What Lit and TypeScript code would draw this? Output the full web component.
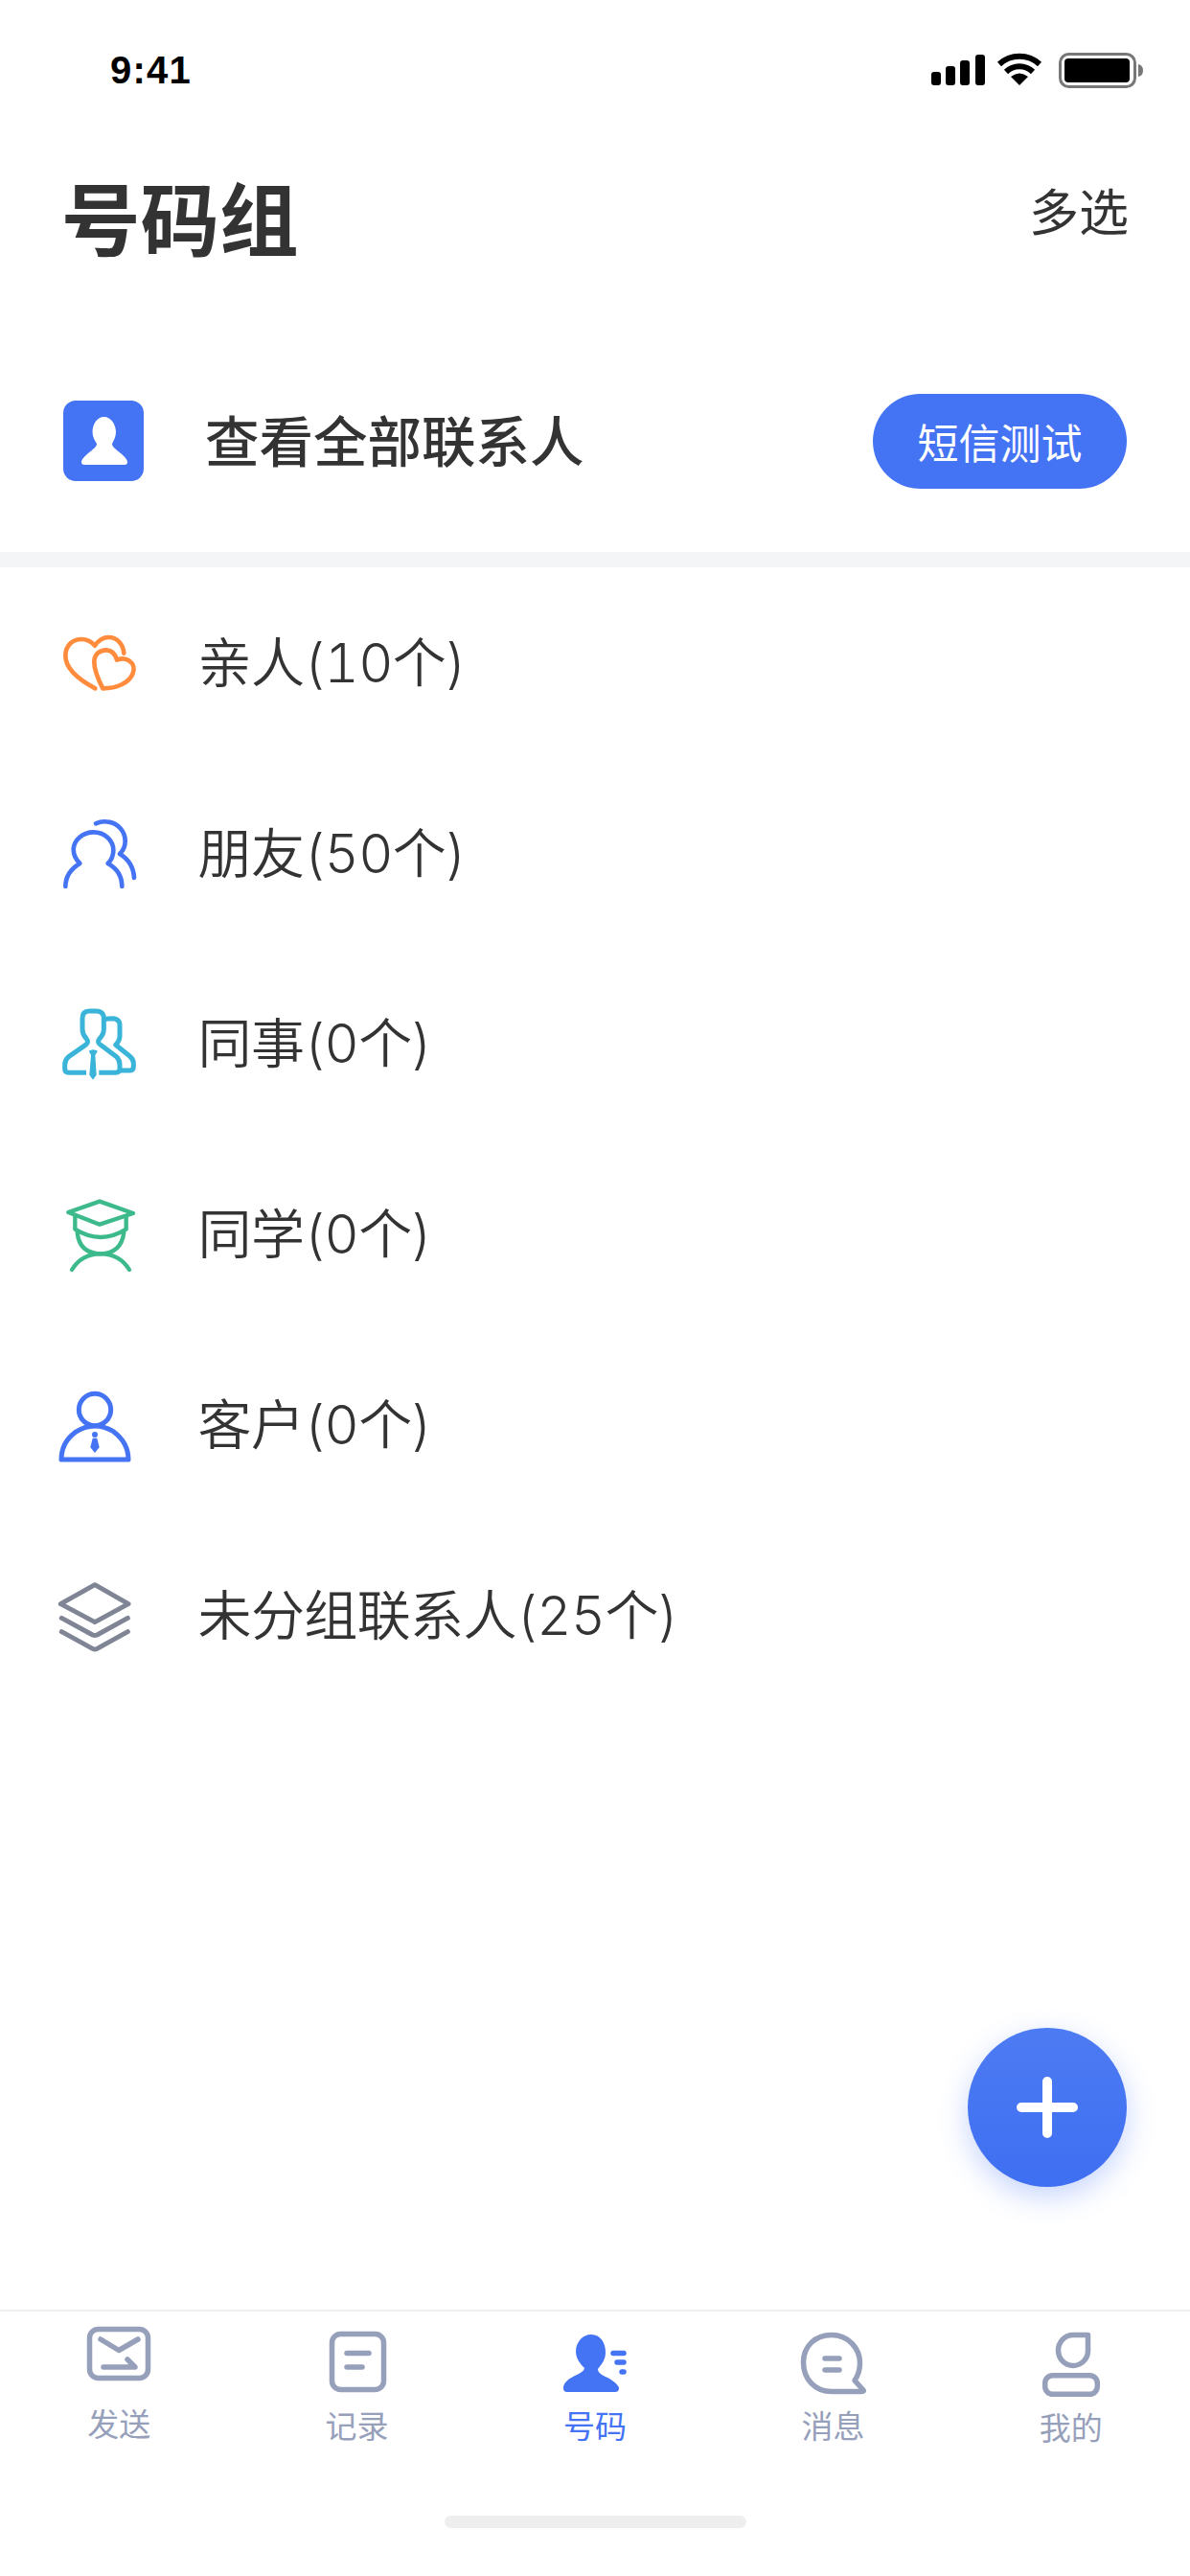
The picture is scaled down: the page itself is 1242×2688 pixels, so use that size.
import { LitElement, html, css } from "lit";
import { customElement } from "lit/decorators.js";

const rows = [
  {
    label: "亲人(10个)",
    icon: html`<svg class="ico" viewBox="0 0 420 300" fill="none" stroke="#ff8c3d" stroke-width="14" stroke-linecap="round" stroke-linejoin="round">
      <path d="M208 232C170 212 115 175 115 130C115 95 140 78 165 78C185 78 198 88 207 98C218 82 235 72 250 72C278 72 296 95 298 122"/>
      <path d="M232 232C218 205 205 175 205 150C205 125 222 112 242 112C258 112 270 122 276 143C290 138 305 138 315 146C328 155 332 170 326 185C315 215 275 232 232 232Z"/>
    </svg>`,
  },
  {
    label: "朋友(50个)",
    icon: html`<svg class="ico" viewBox="0 597 420 300" fill="none" stroke="#4473f4" stroke-width="14" stroke-linecap="round" stroke-linejoin="round">
      <path d="M115 852C115 820 135 795 160 780C145 765 140 750 140 735C142 705 170 682 203 682C238 682 265 708 265 738C265 755 258 770 248 780C275 795 292 820 292 852"/>
      <path d="M210 655C225 648 240 648 250 650C280 655 302 680 302 710C302 725 297 738 285 750C310 765 328 790 330 825"/>
    </svg>`,
  },
  {
    label: "同事(0个)",
    icon: html`<svg class="ico" viewBox="0 24 420 300" fill="none" stroke="#3ab4d8" stroke-width="15" stroke-linejoin="round">
      <path d="M180 265L125 265Q113 265 113 253L113 240Q113 225 125 215L178 178Q190 170 180 158Q168 145 168 130L168 95Q168 72 190 72L210 72Q232 72 235 90L235 130Q235 145 222 158Q212 170 225 178L275 215Q285 225 285 240L285 253Q285 265 272 265L220 265"/>
      <path d="M238 98Q248 95 265 95Q285 98 285 115L285 150Q285 165 272 178L315 212Q328 222 328 235L328 245Q328 258 315 258L288 258"/>
      <path fill="#3ab4d8" stroke="none" d="M188 197Q201 188 216 197L208 210L212 272L201 287L190 272L195 210Z"/>
    </svg>`,
  },
  {
    label: "同学(0个)",
    icon: html`<svg class="ico" viewBox="0 621 420 300" fill="none" stroke="#3dba8b" stroke-width="13" stroke-linecap="round" stroke-linejoin="round">
      <path d="M124 702L222 668L327 705L222 740Z"/>
      <path d="M145 715L145 755Q185 780 225 780Q265 780 305 755L305 715"/>
      <path d="M152 765Q158 830 225 832Q290 830 298 765"/>
      <path d="M135 882Q165 832 225 832Q285 832 315 882"/>
    </svg>`,
  },
  {
    label: "客户(0个)",
    icon: html`<svg class="ico" viewBox="0 45 420 300" fill="none" stroke="#4473f4" stroke-width="15" stroke-linejoin="round">
      <circle cx="207" cy="147" r="50"/>
      <path d="M102 303L312 303Q312 250 265 215Q235 198 207 198Q175 198 145 218Q102 250 102 303Z"/>
      <circle cx="207" cy="225" r="9" fill="#4473f4" stroke="none"/>
      <path fill="#4473f4" stroke="none" d="M200 236L214 236L221 265L207 282L193 265Z"/>
    </svg>`,
  },
  {
    label: "未分组联系人(25个)",
    icon: html`<svg class="ico" viewBox="0 642 420 300" fill="none" stroke="#808596" stroke-width="15" stroke-linecap="round" stroke-linejoin="round">
      <path d="M207 698L312 758L207 815L100 758Z"/>
      <path d="M103 802L200 855Q207 858 214 855L310 802"/>
      <path d="M103 845L200 898Q207 902 214 898L310 845"/>
    </svg>`,
  },
];

const tabs = [
  {
    label: "发送",
    cls: "up",
    icon: html`<svg class="tab-ico" viewBox="74 2420 100 84" fill="none" stroke="#97a0bb" stroke-width="5.5" stroke-linecap="round" stroke-linejoin="round">
      <rect x="93.5" y="2430.5" width="61" height="51" rx="9"/>
      <path d="M105 2441L124 2452.5L144 2441"/>
      <path d="M108 2470L141 2470L133 2462"/>
    </svg>`,
  },
  {
    label: "记录",
    cls: "",
    icon: html`<svg class="tab-ico" viewBox="322 2420 100 84" fill="none" stroke="#97a0bb" stroke-width="5.5" stroke-linecap="round" stroke-linejoin="round">
      <rect x="345.5" y="2435.5" width="54" height="58" rx="9"/>
      <path d="M361 2455.5L384 2455.5"/>
      <path d="M361 2470L377 2470"/>
    </svg>`,
  },
  {
    label: "号码",
    cls: "on",
    icon: html`<svg class="tab-ico" viewBox="571 2420 100 84" fill="none" stroke="#4473f4" stroke-width="5.5" stroke-linecap="round">
      <path fill="#4473f4" stroke="none" d="M617 2436C627 2436 632 2445 632 2455C632 2463 627 2468 624 2472C624 2476 628 2478 634 2481C642 2485 646 2490 646 2492Q646 2496 642 2496L592 2496Q588 2496 588 2492C588 2486 594 2482 600 2479C606 2476 610 2474 610 2471C606 2467 601 2461 601 2454C601 2444 608 2436 617 2436Z"/>
      <path d="M640 2455.5L651 2455.5"/>
      <path d="M644 2465L651 2465"/>
      <path d="M649 2475L651 2475"/>
    </svg>`,
  },
  {
    label: "消息",
    cls: "",
    icon: html`<svg class="tab-ico" viewBox="819 2420 100 84" fill="none" stroke="#97a0bb" stroke-width="5.5" stroke-linecap="round" stroke-linejoin="round">
      <path d="M868 2495.5C850 2495.5 838.5 2482 838.5 2465C838.5 2448 851 2436.5 868 2436.5C885 2436.5 897.5 2450 897.5 2466C897.5 2472 896 2478 892 2484L901 2494Q902 2495.5 899 2495.5Z"/>
      <path d="M861 2461L876 2461"/>
      <path d="M861 2473L876 2473"/>
    </svg>`,
  },
  {
    label: "我的",
    cls: "down",
    icon: html`<svg class="tab-ico" viewBox="1068 2420 100 84" fill="none" stroke="#97a0bb" stroke-width="5.5" stroke-linejoin="round">
      <path d="M1120 2436.5L1135.5 2436.5L1135.5 2453C1135.5 2462 1128 2468.5 1120 2468.5C1111 2468.5 1104.5 2461 1104.5 2452.5C1104.5 2444 1111 2436.5 1120 2436.5Z"/>
      <rect x="1090.7" y="2478.7" width="54.6" height="19.6" rx="8"/>
    </svg>`,
  },
];

@customElement("app-root")
export class AppRoot extends LitElement {
  static styles = css`
    :host {
      display: block;
      width: 1242px;
      height: 2688px;
      background: #fff;
      font-family: "Noto Sans CJK SC", "Noto Sans", sans-serif;
      color: #333;
    }
    .page {
      position: relative;
      height: 100%;
      display: flex;
      flex-direction: column;
    }
    .status {
      height: 110px;
      flex: none;
      display: flex;
      justify-content: space-between;
      align-items: flex-start;
      padding: 0 42px 0 115px;
    }
    .time {
      font: 700 40px/46px "Liberation Sans", sans-serif;
      letter-spacing: 1.2px;
      color: #000;
      margin-top: 50px;
    }
    .sys {
      width: 240px;
      height: 50px;
      margin-top: 50px;
    }
    .head {
      height: 234px;
      flex: none;
      display: flex;
      justify-content: space-between;
      align-items: flex-start;
      padding: 0 64px;
    }
    .title {
      font-size: 82.5px;
      font-weight: 700;
      line-height: 100px;
      margin-top: 65px;
    }
    .multi {
      font-size: 52px;
      line-height: 70px;
      margin-top: 74px;
    }
    .all {
      height: 232px;
      flex: none;
      display: flex;
      align-items: center;
      padding: 0 66px;
    }
    .all-ico {
      width: 84px;
      height: 84px;
      flex: none;
    }
    .all-text {
      flex: 1;
      margin-left: 64px;
      font-size: 56.5px;
      font-weight: 500;
      line-height: 80px;
      margin-top: -6px;
    }
    .btn {
      width: 265px;
      height: 99px;
      border-radius: 50px;
      background: #4473f4;
      color: #fff;
      font-size: 43px;
      display: flex;
      align-items: center;
      justify-content: center;
    }
    .sep {
      height: 16px;
      flex: none;
      background: #f4f5f7;
    }
    .list {
      flex: 1;
    }
    .row {
      height: 198.8px;
      display: flex;
      align-items: center;
      padding-left: 30px;
    }
    .ico {
      width: 140px;
      height: 100px;
      flex: none;
    }
    .row-text {
      margin-left: 36.5px;
      font-family: Inter, "Noto Sans CJK SC", sans-serif;
      font-variant-numeric: tabular-nums;
      letter-spacing: -0.6px;
      font-size: 56px;
      font-weight: 350;
      line-height: 80px;
      margin-top: 1px;
    }
    .fab {
      position: absolute;
      left: 1010px;
      top: 2116px;
      width: 166px;
      height: 166px;
      border-radius: 50%;
      background: linear-gradient(180deg, #4d7bf3, #3f6ff2);
      box-shadow: 0 10px 30px rgba(68, 115, 244, 0.3);
      display: flex;
      align-items: center;
      justify-content: center;
    }
    .fab svg {
      width: 64px;
      height: 64px;
    }
    .bar {
      height: 278px;
      flex: none;
      box-sizing: border-box;
      border-top: 2px solid #f0f0f2;
      display: flex;
      flex-direction: column;
    }
    .tabs {
      display: grid;
      grid-template-columns: repeat(5, 1fr);
      padding-top: 8px;
    }
    .tab {
      display: flex;
      flex-direction: column;
      align-items: center;
      color: #97a0bb;
      font-size: 33px;
      line-height: 44px;
    }
    .tab.on {
      color: #4473f4;
    }
    .tab-ico {
      width: 100px;
      height: 84px;
    }
    .tab-label {
      margin-top: 4px;
    }
    .tab.up .tab-label {
      margin-top: 2px;
    }
    .tab.down .tab-label {
      margin-top: 6px;
    }
    .home {
      width: 315px;
      height: 13px;
      border-radius: 7px;
      background: #eee;
      margin: auto auto 50px;
    }
  `;

  render() {
    return html`<div class="page">
      <div class="status">
        <div class="time">9:41</div>
        <svg class="sys" viewBox="960 50 240 50" fill="none">
          <g fill="#000">
            <rect x="972" y="75" width="10" height="14" rx="3"/>
            <rect x="987" y="69" width="10" height="20" rx="3"/>
            <rect x="1002" y="63" width="10" height="26" rx="3"/>
            <rect x="1018" y="57" width="10" height="32" rx="3"/>
            <path d="M1064 89L1055 80Q1064 73 1073 80Z"/>
            <rect x="1111" y="61" width="68" height="25" rx="4"/>
            <path d="M1188 67Q1193 68 1193 73.5Q1193 79 1188 80Z" fill="#777"/>
          </g>
          <path d="M1043 67A31 31 0 0 1 1085 67" stroke="#000" stroke-width="6"/>
          <path d="M1050 75A20 20 0 0 1 1078 75" stroke="#000" stroke-width="6"/>
          <rect x="1106.5" y="56.5" width="78" height="34" rx="9" stroke="#777" stroke-width="3"/>
        </svg>
      </div>
      <div class="head">
        <div class="title">号码组</div>
        <div class="multi">多选</div>
      </div>
      <div class="all">
        <svg class="all-ico" viewBox="66 418 84 84">
          <rect x="66" y="418" width="84" height="84" rx="13" fill="#4473f4"/>
          <path fill="#fff" d="M108.5 435C116 435 121 443 121 451C121 456 118.5 460 117 463C117 466 121 469 126 473C130 476 133 480 133 482Q133 485 130 485L88 485Q85 485 85 482C85 480 88 476 92 473C97 469 101 466 101 463C99 460 96.500 456 96.500 451C96.500 443 101 435 108.500 435Z"/>
        </svg>
        <div class="all-text">查看全部联系人</div>
        <div class="btn">短信测试</div>
      </div>
      <div class="sep"></div>
      <div class="list">
        ${rows.map(
          (r) => html`<div class="row">${r.icon}<div class="row-text">${r.label}</div></div>`
        )}
      </div>
      <div class="fab">
        <svg viewBox="0 0 64 64" stroke="#fff" stroke-width="10" stroke-linecap="round">
          <path d="M5 32H59M32 5V59"/>
        </svg>
      </div>
      <div class="bar">
        <div class="tabs">
          ${tabs.map(
            (t) => html`<div class="tab ${t.cls}">${t.icon}<div class="tab-label">${t.label}</div></div>`
          )}
        </div>
        <div class="home"></div>
      </div>
    </div>`;
  }
}
